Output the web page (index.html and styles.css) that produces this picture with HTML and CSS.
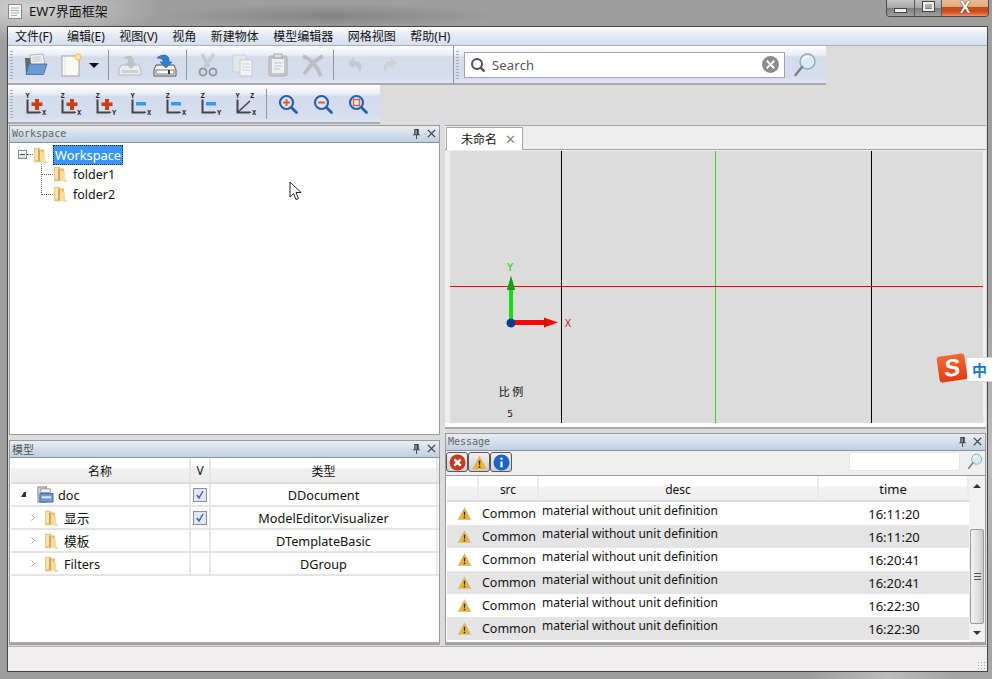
FILE: index.html
```html
<!DOCTYPE html>
<html lang="zh">
<head>
<meta charset="utf-8">
<title>EW7界面框架</title>
<link rel="stylesheet" href="styles.css">
</head>
<body>
<svg class="defs" width="0" height="0" aria-hidden="true">
  <symbol id="folder" viewBox="0 0 16 20">
    <path d="M7 16l6 3 3-1-4-3z" fill="#d4d4d4"/>
    <path d="M1 2h6l1 2h4v11l-5 3H1z" fill="#e7be74"/>
    <path d="M2 3h3.500v13H2z" fill="#f7e3ae"/>
    <path d="M7 5l6 4v10l-6-3z" fill="#f8dd9a"/>
    <path d="M7 5v11l-1.300 1V4z" fill="#c4903e"/>
  </symbol>
  <symbol id="warn" viewBox="0 0 16 16">
    <path d="M8 1L15.500 15H.5z" fill="#c8c8c8"/>
    <path d="M8 2.500L14.200 14H1.800z" fill="#ecb32c"/>
    <path d="M7.200 6h1.600l-.3 4.500h-1zM7.200 11.500h1.600V13H7.200z" fill="#3a2a08"/>
  </symbol>
  <symbol id="axes" viewBox="0 0 24 24">
    <path d="M3.500 7.500V20.500H15" fill="none" stroke="#444" stroke-width="2"/>
    <path d="M15 19l2.500 1.500-2.500 1z" fill="#444"/>
  </symbol>
  <symbol id="plus" viewBox="0 0 24 24">
    <path d="M11 7h4v3.500h3.500v3.500H15v4h-4v-4H7.500v-3.500H11z" fill="#cb3d12"/>
  </symbol>
  <symbol id="minus" viewBox="0 0 24 24">
    <rect x="7" y="10" width="10" height="3.500" fill="#2f9bf0"/>
  </symbol>
  <symbol id="lens" viewBox="0 0 24 24">
    <circle cx="10.500" cy="10.500" r="6.500" fill="#dfe7f4" stroke="#2460ae" stroke-width="2.200"/>
    <path d="M15.500 15.500l5 5" stroke="#2460ae" stroke-width="2.800" stroke-linecap="round"/>
  </symbol>
  <symbol id="bigmag" viewBox="0 0 24 26">
    <circle cx="14.500" cy="9.500" r="7.500" fill="#d4ecf8" stroke="#98a4ae" stroke-width="1.400"/>
    <path d="M10 8a5 5 0 0 1 6-3" stroke="#fff" stroke-width="1.500" fill="none"/>
    <path d="M9 15L2.500 23" stroke="#7c7e80" stroke-width="2.400" stroke-linecap="round"/>
  </symbol>
  <symbol id="tick" viewBox="0 0 14 14">
    <rect x=".5" y=".5" width="13" height="13" fill="#dfe3ea" stroke="#8e9298"/>
    <rect x="2" y="2" width="10" height="10" fill="#e4e8ef"/>
    <path d="M3.800 7l2.200 3L10 3" fill="none" stroke="#3565b8" stroke-width="1.500"/>
  </symbol>
  <symbol id="chev" viewBox="0 0 8 10">
    <path d="M2 1l4 4-4 4" fill="none" stroke="#909090" stroke-width="1"/>
  </symbol>
  <symbol id="pin" viewBox="0 0 10 12">
    <path d="M2.500 1h5v6h1.500v1H1V7h1.500zM4.500 8h1v4h-1zM4 2v5h1V2z" fill="#3c3c3c"/>
  </symbol>
  <symbol id="cross" viewBox="0 0 10 10">
    <path d="M1 1l8 8M9 1L1 9" stroke="#3c3c3c" stroke-width="1.400"/>
  </symbol>
</svg>

<header class="titlebar">
  <svg class="appicon" viewBox="0 0 14 15"><rect x=".5" y=".5" width="13" height="14" fill="#f5f5f5" stroke="#8a8a8a"/><path d="M3 4h8M3 6.500h8M3 9h8M3 11.500h6" stroke="#b0b0b0"/></svg>
  <span class="apptitle">EW7界面框架</span>
  <div class="winbtns">
    <div class="winbtn wb-min"><span class="glyph-min"></span></div>
    <div class="winbtn wb-max"><span class="glyph-max"></span></div>
    <div class="winbtn wb-close">X</div>
  </div>
</header>

<div class="window">
  <nav class="menubar">
    <span>文件(F)</span><span>编辑(E)</span><span>视图(V)</span><span>视角</span><span>新建物体</span><span>模型编辑器</span><span>网格视图</span><span>帮助(H)</span>
  </nav>

  <div class="toolrow">
    <div class="toolbar tb-file">
      <i class="handle"></i>
      <div class="tbtn"><svg viewBox="0 0 24 24"><path d="M1 5h6l2 2h10v14H2z" fill="#5e6a78"/><path d="M6 2l13-1 2 10-14 1z" fill="#f0f0f0" stroke="#8e8e8e" stroke-width=".6"/><path d="M8 4.500l9-.7M8.300 6.500l9-.7M8.600 8.500l9-.7" stroke="#bdbdbd" stroke-width=".8"/><path d="M5 11h18l-3.500 10.500H2z" fill="#6a9ad4" stroke="#3e6ba6" stroke-width=".8"/></svg></div>
      <div class="tbtn tbtn-new"><svg viewBox="0 0 24 24"><rect x="3" y="3" width="17" height="20" fill="#f8f8f4" stroke="#a4a4a0"/><path d="M6 4v18" stroke="#e4e4e0"/><circle cx="19" cy="4" r="3" fill="#fbe7a4" stroke="#efc14a"/></svg></div>
      <i class="dropdown"></i>
      <i class="tsep"></i>
      <div class="tbtn faded"><svg viewBox="0 0 24 24"><path d="M3 12h18l2 5v5H1v-5z" fill="#eeeeee" stroke="#b4b4b4"/><rect x="4" y="17" width="16" height="3" fill="#cfcfcf"/><path d="M5 6c4-5 10-4 11 1v3h3l-6 6-6-6h3V8c0-2-3-3-5-2z" fill="#bdbdbd"/></svg></div>
      <div class="tbtn"><svg viewBox="0 0 24 24"><path d="M3 12h18l2 5v6H1v-6z" fill="#f2f0ec" stroke="#5c5040"/><rect x="3" y="17" width="18" height="4" fill="#fff" stroke="#4a4a4a" stroke-width=".7"/><rect x="15" y="17" width="2" height="4" fill="#333"/><path d="M4 5c4-4 11-4 12 1v3h3l-6 6-6-6h3V8c0-2-3-3-6-3z" fill="#2f7fd0" stroke="#1c5a9e" stroke-width=".6"/></svg></div>
      <i class="tsep"></i>
      <div class="tbtn faded"><svg viewBox="0 0 24 24"><path d="M6 1l7 13M18 1L9 14" stroke="#c6c6c6" stroke-width="3.200"/><circle cx="7" cy="19" r="3.500" fill="none" stroke="#8e8e8e" stroke-width="2"/><circle cx="17" cy="19" r="3.500" fill="none" stroke="#8e8e8e" stroke-width="2"/></svg></div>
      <div class="tbtn faded"><svg viewBox="0 0 24 24"><rect x="2" y="2" width="13" height="17" fill="#e8e8e8" stroke="#cccccc"/><path d="M9 7h12v16H9z" fill="#f8f8f8" stroke="#c8c8c8"/><path d="M11 11h8M11 14h8M11 17h8" stroke="#cccccc"/></svg></div>
      <div class="tbtn faded"><svg viewBox="0 0 24 24"><rect x="3" y="3" width="18" height="20" rx="1.500" fill="#c4c4c4" stroke="#a8a8a8"/><rect x="8" y="1" width="8" height="4" fill="#dedede" stroke="#a0a0a0"/><path d="M6 6h12v14H6z" fill="#f4f4f4"/><path d="M8 10h8M8 13h8M8 16h6" stroke="#c0c0c0"/></svg></div>
      <div class="tbtn faded"><svg viewBox="0 0 24 24"><path d="M2 3c7 3 14 10 18 20M22 3C15 6 8 14 3 21" fill="none" stroke="#b8b8b8" stroke-width="3.600"/></svg></div>
      <i class="tsep"></i>
      <div class="tbtn faded"><svg viewBox="0 0 24 24"><path d="M5 10l6-6v4c7 0 9 5 6 11-1-4-3-6-6-6v3z" fill="#c0c6ce"/><path d="M8 21c3 1 6 1 8-1" stroke="#cfe0ec" stroke-width="1.500" fill="none"/></svg></div>
      <div class="tbtn faded"><svg viewBox="0 0 24 24"><path d="M19 10l-6-6v4c-7 0-9 5-6 11 1-4 3-6 6-6v3z" fill="#cdd0d4"/></svg></div>
      <i class="tsep tsep-end"></i>
    </div>
    <div class="toolbar tb-search">
      <i class="handle"></i>
      <div class="searchbox">
        <svg class="s-ico" viewBox="0 0 16 16"><circle cx="7" cy="7" r="5" fill="none" stroke="#505050" stroke-width="2"/><path d="M10.500 10.500l4 4" stroke="#505050" stroke-width="2.400"/></svg>
        <span class="s-text">Search</span>
        <span class="s-clear"><svg viewBox="0 0 16 16"><circle cx="8" cy="8" r="8" fill="#8c8c8c"/><path d="M4.500 4.500l7 7M11.500 4.500l-7 7" stroke="#fff" stroke-width="1.800"/></svg></span>
      </div>
      <svg class="bigmag"><use href="#bigmag"/></svg>
    </div>
  </div>

  <div class="toolrow">
    <div class="toolbar tb-view">
      <i class="handle"></i>
      <div class="tbtn ax"><svg viewBox="0 0 24 24"><use href="#axes"/><use href="#plus"/><text x="1.500" y="6" class="axl">Y</text><text x="18" y="23" class="axl">X</text></svg></div>
      <div class="tbtn ax"><svg viewBox="0 0 24 24"><use href="#axes"/><use href="#plus"/><text x="1.500" y="6" class="axl">Z</text><text x="18" y="23" class="axl">X</text></svg></div>
      <div class="tbtn ax"><svg viewBox="0 0 24 24"><use href="#axes"/><use href="#plus"/><text x="1.500" y="6" class="axl">Z</text><text x="18" y="23" class="axl">Y</text></svg></div>
      <div class="tbtn ax"><svg viewBox="0 0 24 24"><use href="#axes"/><use href="#minus"/><text x="1.500" y="6" class="axl">Y</text><text x="18" y="23" class="axl">X</text></svg></div>
      <div class="tbtn ax"><svg viewBox="0 0 24 24"><use href="#axes"/><use href="#minus"/><text x="1.500" y="6" class="axl">Z</text><text x="18" y="23" class="axl">X</text></svg></div>
      <div class="tbtn ax"><svg viewBox="0 0 24 24"><use href="#axes"/><use href="#minus"/><text x="1.500" y="6" class="axl">Z</text><text x="18" y="23" class="axl">Y</text></svg></div>
      <div class="tbtn ax"><svg viewBox="0 0 24 24"><use href="#axes"/><path d="M3.500 20.500L16 9" stroke="#444" stroke-width="1.600"/><text x="1.500" y="6" class="axl">Y</text><text x="16" y="6" class="axl">Z</text><text x="18" y="23" class="axl">X</text></svg></div>
      <i class="tsep"></i>
      <div class="tbtn ax"><svg viewBox="0 0 24 24"><use href="#lens"/><path d="M7 10.500h7M10.500 7v7" stroke="#d9622e" stroke-width="2"/></svg></div>
      <div class="tbtn ax"><svg viewBox="0 0 24 24"><use href="#lens"/><path d="M7 10.500h7" stroke="#d9622e" stroke-width="2"/></svg></div>
      <div class="tbtn ax"><svg viewBox="0 0 24 24"><use href="#lens"/><rect x="7.500" y="7.500" width="6" height="6" fill="none" stroke="#d9622e" stroke-width="1.400"/></svg></div>
    </div>
  </div>

  <main class="main">
    <div class="col col-left">
      <section class="dock dock-ws">
        <div class="docktitle"><span class="mono">Workspace</span><span class="dockbtns"><svg class="d-pin"><use href="#pin"/></svg><svg class="d-x"><use href="#cross"/></svg></span></div>
        <div class="tree">
          <div class="tree-row tree-root">
            <i class="exp"></i><i class="hdots"></i>
            <svg class="fld"><use href="#folder"/></svg>
            <span class="sel">Workspace</span>
          </div>
          <div class="tree-row tree-child"><i class="hdots2"></i><svg class="fld"><use href="#folder"/></svg><span class="tlabel">folder1</span></div>
          <div class="tree-row tree-child"><i class="hdots2"></i><svg class="fld"><use href="#folder"/></svg><span class="tlabel">folder2</span></div>
          <i class="vdots"></i>
        </div>
      </section>
      <section class="dock dock-model">
        <div class="docktitle"><span class="cjktitle">模型</span><span class="dockbtns"><svg class="d-pin"><use href="#pin"/></svg><svg class="d-x"><use href="#cross"/></svg></span></div>
        <div class="mtable">
          <div class="mhead"><span class="mc1">名称</span><span class="mc2">V</span><span class="mc3">类型</span></div>
          <div class="mrow"><span class="mc1 l0"><i class="tri"></i><svg class="docico" viewBox="0 0 18 18"><rect x="1" y="1" width="9" height="16" fill="#d8d8d8" stroke="#808080"/><path d="M4 3h10v4H4z" fill="#f2f2f2" stroke="#909090"/><path d="M3 8h14v9H3z" fill="#6d9ad6" stroke="#44689c"/><rect x="5" y="11" width="10" height="2" fill="#e8eef6"/></svg>doc</span><span class="mc2"><svg class="chk"><use href="#tick"/></svg></span><span class="mc3">DDocument</span></div>
          <div class="mrow"><span class="mc1 l1"><svg class="chev"><use href="#chev"/></svg><svg class="fld"><use href="#folder"/></svg>显示</span><span class="mc2"><svg class="chk"><use href="#tick"/></svg></span><span class="mc3">ModelEditor.Visualizer</span></div>
          <div class="mrow"><span class="mc1 l1"><svg class="chev"><use href="#chev"/></svg><svg class="fld"><use href="#folder"/></svg>模板</span><span class="mc2"></span><span class="mc3">DTemplateBasic</span></div>
          <div class="mrow"><span class="mc1 l1"><svg class="chev"><use href="#chev"/></svg><svg class="fld"><use href="#folder"/></svg>Filters</span><span class="mc2"></span><span class="mc3">DGroup</span></div>
        </div>
      </section>
    </div>

    <div class="col col-right">
      <section class="tabs">
        <div class="tabstrip"><div class="tab"><span>未命名</span><b class="tabx">✕</b></div></div>
        <div class="viewport">
          <svg class="scene" viewBox="0 0 533 272">
            <path d="M111.500 0V272M421.500 0V272" stroke="#000"/>
            <path d="M265.500 0V272" stroke="#20dc32"/>
            <path d="M0 135.500H533" stroke="#ff0000"/>
            <path d="M59 169V139h-2l4-14 4 14h-2v30z" fill="#10e010"/>
            <path d="M61 125l-4 14h8z" fill="#12a012"/>
            <path d="M61 169.500H94v-2.500l14 5-14 5v-2.500H61z" fill="#ff0505" transform="translate(0 -.500)"/>
            <path d="M94 167l3 5-3 5z" fill="#a02a10"/>
            <circle cx="61" cy="172" r="4.500" fill="#0c3a8e"/>
            <text x="60" y="120" class="lbl-y">Y</text>
            <text x="118" y="176" class="lbl-x">X</text>
            <text x="61" y="245" class="lbl-s">比 例</text>
            <text x="60" y="266" class="lbl-n">5</text>
          </svg>
        </div>
      </section>
      <section class="dock dock-msg">
        <div class="docktitle"><span class="mono">Message</span><span class="dockbtns"><svg class="d-pin"><use href="#pin"/></svg><svg class="d-x"><use href="#cross"/></svg></span></div>
        <div class="msgtools">
          <div class="mbtn"><svg viewBox="0 0 16 16"><circle cx="8" cy="8" r="7.500" fill="#c9371c"/><path d="M5 5l6 6M11 5l-6 6" stroke="#fff" stroke-width="2.400"/></svg></div>
          <div class="mbtn"><svg viewBox="0 0 16 16"><use href="#warn"/></svg></div>
          <div class="mbtn"><svg viewBox="0 0 16 16"><circle cx="8" cy="8" r="7.500" fill="#1f66c4"/><path d="M7 3.500h2v2H7zM7 7h2v5.500H7z" fill="#fff"/></svg></div>
          <div class="msgfind"></div>
          <svg class="msgmag"><use href="#bigmag"/></svg>
        </div>
        <div class="msgbody">
          <div class="msgtable">
            <div class="ghead"><span class="g1"></span><span class="g2">src</span><span class="g3">desc</span><span class="g4">time</span></div>
            <div class="grow"><span class="g1"><svg class="wrn"><use href="#warn"/></svg></span><span class="g2">Common</span><span class="g3">material without unit definition</span><span class="g4">16:11:20</span></div>
            <div class="grow alt"><span class="g1"><svg class="wrn"><use href="#warn"/></svg></span><span class="g2">Common</span><span class="g3">material without unit definition</span><span class="g4">16:11:20</span></div>
            <div class="grow"><span class="g1"><svg class="wrn"><use href="#warn"/></svg></span><span class="g2">Common</span><span class="g3">material without unit definition</span><span class="g4">16:20:41</span></div>
            <div class="grow alt"><span class="g1"><svg class="wrn"><use href="#warn"/></svg></span><span class="g2">Common</span><span class="g3">material without unit definition</span><span class="g4">16:20:41</span></div>
            <div class="grow"><span class="g1"><svg class="wrn"><use href="#warn"/></svg></span><span class="g2">Common</span><span class="g3">material without unit definition</span><span class="g4">16:22:30</span></div>
            <div class="grow alt"><span class="g1"><svg class="wrn"><use href="#warn"/></svg></span><span class="g2">Common</span><span class="g3">material without unit definition</span><span class="g4">16:22:30</span></div>
          </div>
          <div class="vscroll">
            <i class="arr-up"></i>
            <div class="thumb"><i class="grip"></i></div>
            <i class="arr-down"></i>
          </div>
        </div>
      </section>
    </div>
  </main>

  <footer class="statusbar"><i class="sizegrip"></i></footer>
</div>

<div class="ime"><span class="ime-s">S</span><span class="ime-box">中</span></div>
<svg class="cursor" viewBox="0 0 14 20"><path d="M1 1v15l3.500-3.500 2.500 6 2.500-1-2.500-6H12z" fill="#fff" stroke="#222" stroke-width="1"/></svg>
</body>
</html>
```
FILE: styles.css
```css
* { box-sizing: border-box; }
html, body { margin: 0; height: 100%; }
body {
  position: relative;
  width: 992px;
  height: 679px;
  overflow: hidden;
  display: flex;
  flex-direction: column;
  font-family: "Noto Sans", "Noto Sans CJK SC", sans-serif;
  font-size: 13px;
  color: #111;
  background:
    radial-gradient(ellipse 130px 34px at 30px 8px, #d2d2d2 0%, rgba(210,210,210,0) 100%),
    radial-gradient(ellipse 170px 12px at 330px 16px, #848484 0%, rgba(132,132,132,0) 100%),
    linear-gradient(115deg, rgba(0,0,0,0) 86%, #bcbcbc 92%, #a4a4a4 97%),
    #9e9e9e;
}
i { display: block; }
svg { display: block; flex: none; }
.defs { position: absolute; }

/* title bar */
.titlebar { height: 26px; flex: none; display: flex; align-items: flex-start; padding: 4px 3px 0 8px; }
.appicon { width: 14px; height: 15px; }
.apptitle { margin-left: 7px; font-size: 13px; line-height: 15px; color: #111; }
.winbtns { margin: -4px 0 0 auto; display: flex; height: 17px; border: 1px solid #4a4a4a; border-top: 0; border-radius: 0 0 4px 4px; overflow: hidden; }
.winbtn { display: flex; align-items: center; justify-content: center; width: 28px; background: linear-gradient(#c4c4c4, #a8a8a8 48%, #7e7e7e 52%, #a0a0a0); border-right: 1px solid #5a5a5a; }
.wb-max { width: 27px; }
.wb-close { width: 46px; border: 0; font: bold 16px/14px "Liberation Sans", sans-serif; color: #fff; text-shadow: 0 0 1px #222, 0 0 1px #222; background: linear-gradient(#ebbd98, #e6a67a 42%, #b5561e 46%, #b5561e 62%, #e0401a 68%, #e2592a 82%, #e09a70); }
.glyph-min { width: 13px; height: 5px; background: #eee; border: 1px solid #444; margin-top: 4px; }
.glyph-max { width: 11px; height: 9px; border: 2px solid #eee; outline: 1px solid #444; margin-top: -3px; }

/* window */
.window { flex: 1; margin: 0 4px 7px 7px; display: flex; flex-direction: column; background: #dcdcdc; border: 1px solid #454545; min-height: 0; }
.menubar { height: 19px; flex: none; display: flex; gap: 14.500px; align-items: center; padding: 0 0 0 7px; font-size: 12px; background: linear-gradient(#fff, #e6ebf6 40%, #d7deef 100%); border-bottom: 1px solid #aab0bc; }

/* toolbars */
.toolrow { display: flex; height: 39px; flex: none; }
.toolbar { display: flex; align-items: center; height: 39px; padding-left: 10px; position: relative; background: linear-gradient(#fff, #e9edf6 24%, #d4dbec 30%, #d6ddee 85%, #dfe5f4); border-bottom: 2px solid #a9a9a9; }
.tb-file { width: 446px; }
.tb-search { width: 372px; }
.tb-view { width: 372px; }
.handle { position: absolute; left: 2px; top: 5px; bottom: 4px; width: 3px; background: repeating-linear-gradient(#a8acb4 0 1px, transparent 1px 3px); }
.tbtn { width: 35px; height: 26px; display: flex; align-items: center; justify-content: center; }
.tbtn svg { width: 24px; height: 24px; }
.faded { opacity: .85; }
.dropdown { width: 0; height: 0; margin: 2px 3px 0 1px; border: 5px solid transparent; border-top: 5px solid #111; border-bottom: 0; }
.tsep { width: 1px; height: 30px; margin: 0 3.5px 0 3px; background: #8f949c; }
.tb-file .dropdown + .tsep { margin-left: 6px; }
.tsep-end { margin-left: auto; margin-right: 0; height: 39px; }
.axl { font: bold 7px "DejaVu Sans Mono", monospace; fill: #222; }

.searchbox { width: 321px; height: 26px; display: flex; align-items: center; background: #fff; border: 1px solid #a0a3aa; padding: 0 5px; }
.s-ico { width: 16px; height: 16px; }
.s-text { margin-left: 6px; color: #555; font-size: 13px; letter-spacing: .2px; }
.s-clear { margin-left: auto; }
.s-clear svg { width: 17px; height: 17px; }
.bigmag { width: 24px; height: 26px; margin-left: 8px; }

/* main */
.main { display: flex; gap: 5px; padding: 1px 0 1px 1px; height: 522px; flex: none; }
.col { display: flex; flex-direction: column; }
.col-left { width: 431px; gap: 5px; }
.col-right { width: 541px; gap: 4px; }

.dock { display: flex; flex-direction: column; border: 1px solid #9a9a9a; background: #fff; }
.dock-ws { height: 310px; }
.dock-model { height: 205px; }
.dock-msg { height: 212px; background: #efefef; }
.docktitle { height: 17px; flex: none; display: flex; align-items: center; padding: 0 3px 1px 2px; background: linear-gradient(#e8edf3, #bfd0e3); border-bottom: 1px solid #8e9298; color: #6a6a6a; }
.mono { font: 10px "DejaVu Sans Mono", monospace; color: #666; }
.cjktitle { font-size: 11px; color: #555; }
.dockbtns { margin-left: auto; display: flex; align-items: center; gap: 6px; }
.d-pin { width: 9px; height: 11px; }
.d-x { width: 9px; height: 9px; }

/* tree */
.tree { flex: 1; position: relative; background: #fff; padding-top: 2px; }
.tree-row { height: 20px; display: flex; align-items: center; position: relative; }
.tree-root { padding-left: 8px; height: 19px; }
.tree-child { padding-left: 43px; }
.exp { width: 9px; height: 9px; border: 1px solid #8c8c8c; background: linear-gradient(#fff, #d9d9d9); position: relative; }
.exp::after { content: ""; position: absolute; left: 1px; right: 1px; top: 3px; height: 1px; background: #2a4f9a; }
.hdots { width: 6px; height: 1px; border-top: 1px dotted #666; }
.fld { width: 15px; height: 18px; }
.sel { margin-left: 5px; height: 20px; padding: 0 1px; line-height: 18px; font-size: 12.800px; color: #fff; background: #3a96f5; border: 1px dotted #222; }
.tlabel { margin-left: 5px; font-size: 12.500px; }
.hdots2 { position: absolute; left: 31px; width: 12px; height: 1px; border-top: 1px dotted #666; }
.vdots { position: absolute; left: 31px; top: 21px; height: 31px; width: 1px; border-left: 1px dotted #666; }

/* model table */
.mtable { flex: 1; background: #fff; padding-left: 1px; border-bottom: 2px solid #a8a8a8; }
.mhead { display: flex; height: 26px; background: linear-gradient(#fff, #fff 40%, #f0f0f0 45%, #ececec); border-bottom: 2px solid #dcdcdc; font-size: 12px; }
.mhead span { display: flex; align-items: center; justify-content: center; border-right: 2px solid #e6e6e6; padding-top: 1px; }
.mrow { display: flex; height: 23px; border-bottom: 2px solid #e4e4e4; font-size: 12.700px; }
.mrow span { display: flex; align-items: center; border-right: 2px solid #e8e8e8; }
.mc1 { width: 180px; }
.mc2 { width: 20px; justify-content: center; }
.mc3 { width: 227px; justify-content: center; }
.l0 { padding-left: 10px; }
.l1 { padding-left: 19px; }
.tri { width: 0; height: 0; border-left: 3px solid transparent; border-right: 2px solid #333; border-bottom: 5px solid #333; margin-right: 11px; }
.docico { width: 17px; height: 17px; margin-right: 4px; }
.chev { width: 6px; height: 9px; margin-right: 8px; }
.l1 .fld { margin-right: 5px; width: 15px; height: 18px; }
.chk { width: 14px; height: 14px; }

/* tabs & viewport */
.tabs { height: 304px; background: #eeeeee; border-top: 1px solid #a6a6a6; border-bottom: 2px solid #a8a8a8; display: flex; flex-direction: column; padding: 1px 0 4px 0; box-shadow: inset 0 -4px 0 #fff; }
.tabstrip { height: 23px; flex: none; border-bottom: 1px solid #a6a6a6; padding-left: 1px; display: flex; align-items: stretch; }
.tab { width: 77px; height: 23px; background: #fff; border: 1px solid #a6a6a6; border-bottom: 0; display: flex; align-items: center; justify-content: space-between; padding: 0 6px 0 14px; font-size: 12px; }
.tabx { color: #8a8a8a; font: bold 13px "DejaVu Sans", sans-serif; }
.viewport { margin: 1px 3px 0 5px; height: 272px; background: #dcdcdc; flex: none; }
.scene { width: 533px; height: 272px; }
.lbl-y { font: 10px "DejaVu Sans", sans-serif; fill: #10d010; text-anchor: middle; }
.lbl-x { font: 10px "DejaVu Sans", sans-serif; fill: #b83030; text-anchor: middle; }
.lbl-s { font: 11px "Noto Sans CJK SC", sans-serif; fill: #111; text-anchor: middle; }
.lbl-n { font: 9px "DejaVu Sans", sans-serif; fill: #111; text-anchor: middle; }

/* messages */
.msgtools { height: 25px; flex: none; display: flex; align-items: flex-start; padding-top: 1px; background: #efefef; border-bottom: 1px solid #9a9a9a; }
.mbtn { width: 22px; height: 20px; display: flex; align-items: center; justify-content: center; border: 1px solid #585858; border-radius: 3px; background: linear-gradient(#f0f0f0, #cfcfcf); }
.mbtn svg { width: 17px; height: 17px; }
.msgfind { margin-left: auto; width: 111px; height: 19px; background: #fff; border-radius: 2px; border: 1px solid #e6e6e6; }
.msgmag { width: 16px; height: 19px; margin: 0 2px 0 7px; }
.msgbody { flex: 1; display: flex; background: #fff; border-bottom: 2px solid #a8a8a8; }
.msgtable { width: 523px; padding-left: 1px; }
.ghead { display: flex; height: 26px; font-size: 12px; background: linear-gradient(#fff, #fff 40%, #f2f2f2 45%, #eeeeee); border-bottom: 2px solid #dcdcdc; }
.ghead span { display: flex; align-items: center; justify-content: center; border-right: 2px solid #ebebeb; padding-top: 2px; }
.grow { display: flex; height: 23px; font-size: 12.500px; }
.grow.alt { background: #e4e4e4; }
.g1 { width: 32px; display: flex; align-items: center; justify-content: center; padding-left: 2px; }
.g2 { width: 60px; display: flex; align-items: center; justify-content: center; }
.g3 { width: 280px; display: flex; align-items: flex-start; padding-left: 3px; line-height: 17px; font-size: 12px; }
.grow .g3 { line-height: 18px; }
.ghead .g3 { padding-left: 0; }
.g4 { width: 150px; display: flex; align-items: center; justify-content: center; font-size: 13px; }
.wrn { width: 15px; height: 15px; }
.vscroll { flex: 1; display: flex; flex-direction: column; align-items: center; background: #f1f1f1; }
.arr-up { margin-top: 8px; border: 4px solid transparent; border-bottom: 4px solid #333; border-top: 0; }
.thumb { width: 14px; height: 95px; margin-top: 41px; background: linear-gradient(90deg, #f2f2f2, #dedede 60%, #c8c8c8); border: 1px solid #9c9c9c; border-radius: 2px; display: flex; align-items: center; justify-content: center; }
.grip { width: 7px; height: 7px; background: repeating-linear-gradient(#555 0 1px, transparent 1px 3px); }
.arr-down { margin-top: 7px; border: 4px solid transparent; border-top: 4px solid #333; border-bottom: 0; }

/* status */
.statusbar { flex: 1; background: #f0efed; position: relative; border-top: 1px solid #b0b0b0; }
.sizegrip { position: absolute; right: 1px; bottom: 1px; width: 9px; height: 9px; background: radial-gradient(circle, #a0a0a0 1px, transparent 1px) 0 0 / 3px 3px; }

/* overlays */
.ime { position: absolute; left: 938px; top: 354px; width: 54px; height: 28px; display: flex; align-items: center; }
.ime-s { width: 28px; height: 26px; z-index: 1; border-radius: 3px; transform: rotate(-8deg); background: linear-gradient(#f26a35, #e43c10); color: #fff; font: italic bold 24px/26px "Liberation Sans", sans-serif; text-align: center; }
.ime-box { width: 26px; height: 25px; margin-top: 3px; background: #fff; border: 1px solid #d0d8e2; border-right: 0; color: #1a78d0; font: bold 15px/23px "Noto Sans CJK SC", sans-serif; text-align: center; }
.cursor { position: absolute; left: 289px; top: 181px; width: 14px; height: 20px; }
```
